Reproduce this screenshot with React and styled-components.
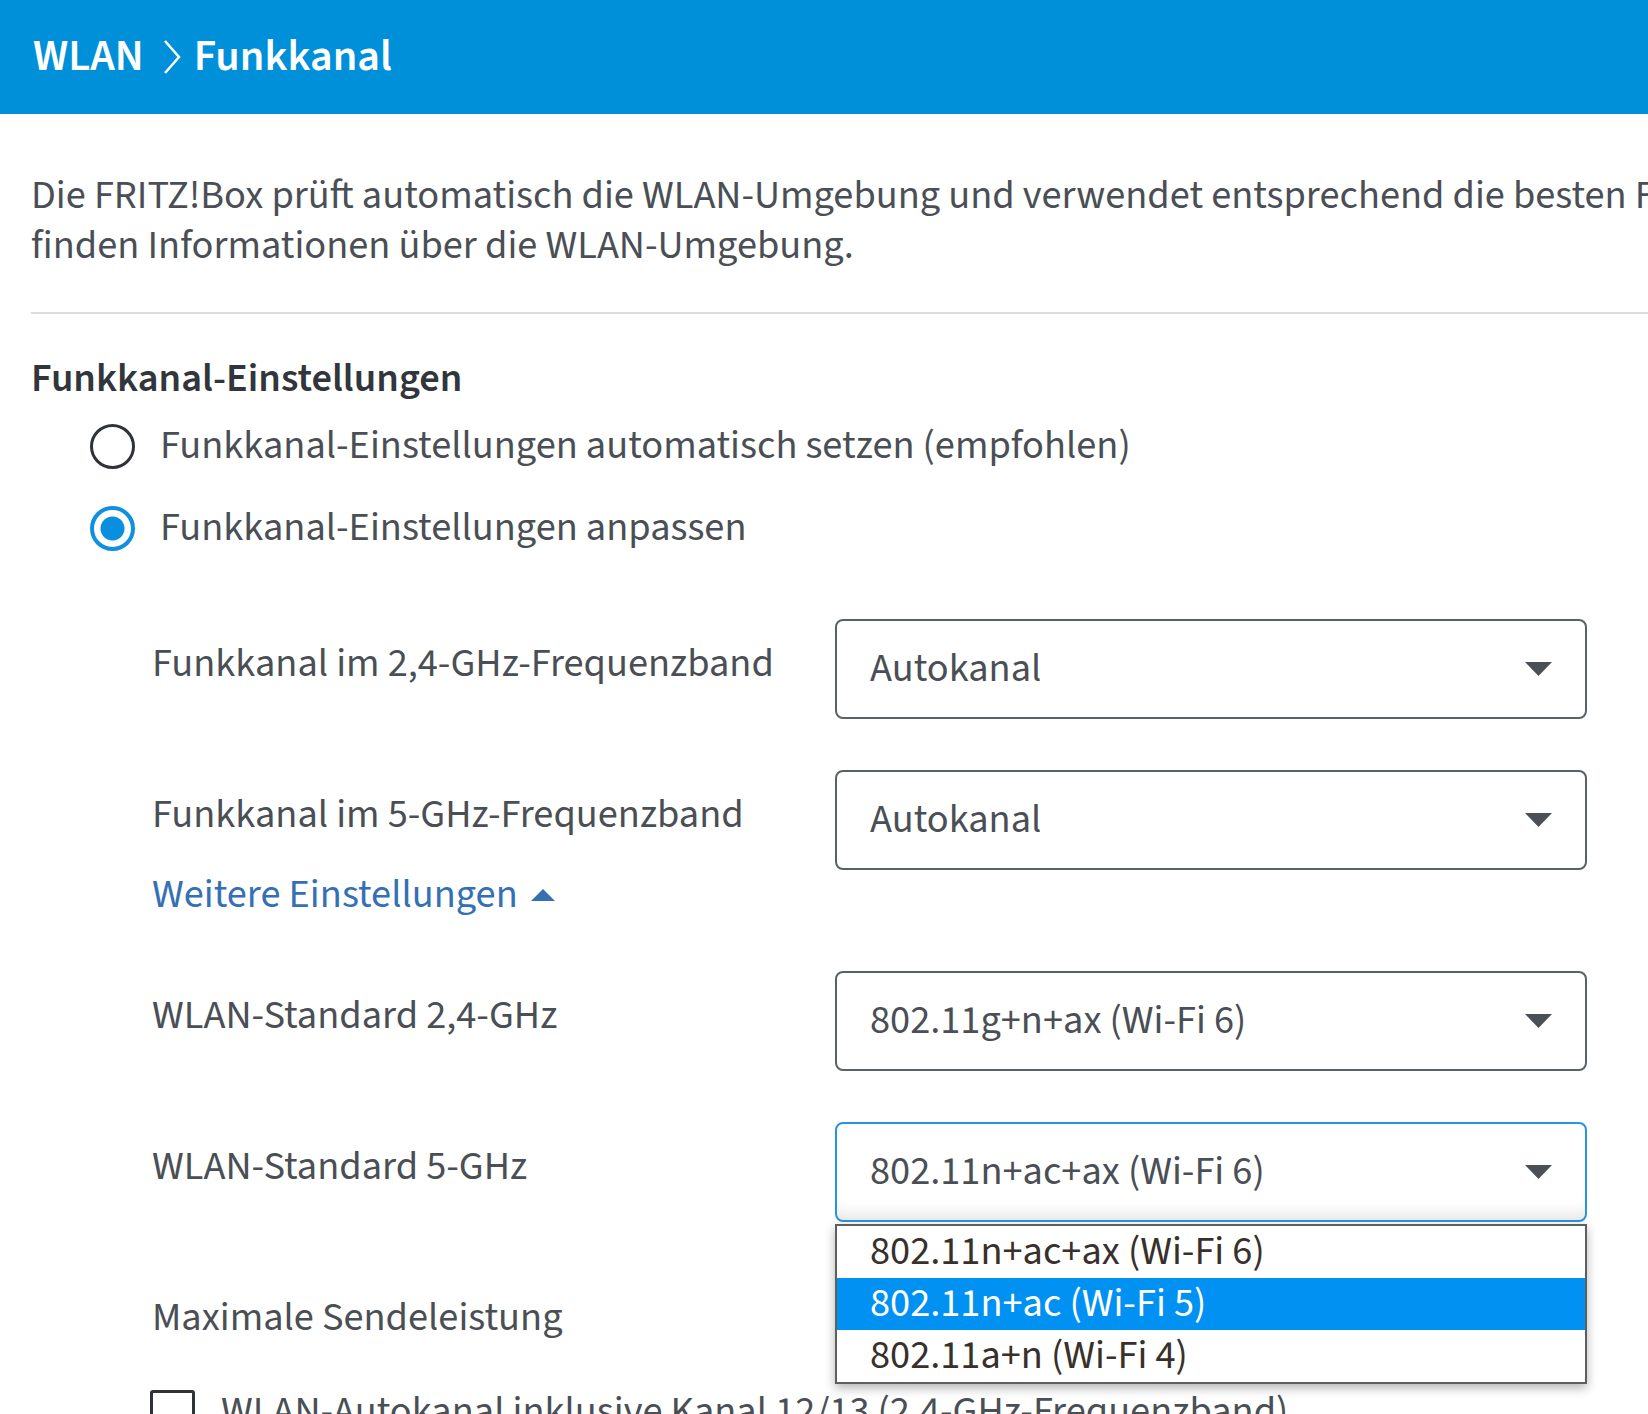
import React from "react";
import styled, { createGlobalStyle } from "styled-components";

const GlobalStyle = createGlobalStyle`
  html, body {
    margin: 0;
    background: #fff;
    overflow: hidden;
  }
  body {
    font-family: "Source Sans 3", "Source Sans Pro", Lato, sans-serif;
    color: #4a4f55;
  }
  * { box-sizing: border-box; }
`;

const fields = [
  { label: "Funkkanal im 2,4-GHz-Frequenzband", value: "Autokanal" },
  { label: "Funkkanal im 5-GHz-Frequenzband", value: "Autokanal", more: true },
  { label: "WLAN-Standard 2,4-GHz", value: "802.11g+n+ax (Wi-Fi 6)" },
  {
    label: "WLAN-Standard 5-GHz",
    value: "802.11n+ac+ax (Wi-Fi 6)",
    open: true,
    options: ["802.11n+ac+ax (Wi-Fi 6)", "802.11n+ac (Wi-Fi 5)", "802.11a+n (Wi-Fi 4)"],
    highlighted: 1,
  },
  { label: "Maximale Sendeleistung" },
];

function App() {
  return (
    <>
      <GlobalStyle />
      <Header>
        <Crumb>WLAN</Crumb>
        <Chevron viewBox="0 0 18 36" aria-hidden="true">
          <polyline points="2,2 16,18 2,34" />
        </Chevron>
        <Crumb>Funkkanal</Crumb>
      </Header>

      <Content>
        <Intro>
          <IntroLine>
            Die FRITZ!Box prüft automatisch die WLAN-Umgebung und verwendet entsprechend die besten Funkkanal-Einstellungen. Unter „WLAN-Umgebung“ Sie
          </IntroLine>
          <IntroLine>finden Informationen über die WLAN-Umgebung.</IntroLine>
        </Intro>

        <Divider />

        <SectionTitle>Funkkanal-Einstellungen</SectionTitle>

        <RadioList>
          <RadioRow>
            <RadioMark />
            Funkkanal-Einstellungen automatisch setzen (empfohlen)
          </RadioRow>
          <RadioRow>
            <RadioMark $checked />
            Funkkanal-Einstellungen anpassen
          </RadioRow>
        </RadioList>

        <Settings>
          {fields.map((f) => (
            <FieldRow key={f.label}>
              <FieldLabel>
                {f.label}
                {f.more && (
                  <MoreLink>
                    Weitere Einstellungen
                    <svg width="24" height="12" viewBox="0 0 24 12" aria-hidden="true">
                      <path d="M0 12 H24 L12 0 Z" fill="currentColor" />
                    </svg>
                  </MoreLink>
                )}
              </FieldLabel>
              {f.value && (
                <SelectWrap>
                  <SelectBox $focused={f.open}>
                    {f.value}
                    <svg width="27" height="14" viewBox="0 0 27 14" aria-hidden="true">
                      <path d="M0 0 H27 L13.5 14 Z" fill="#4a5056" />
                    </svg>
                  </SelectBox>
                  {f.open && (
                    <OptionList>
                      {f.options.map((o, i) => (
                        <OptionItem key={o} $active={i === f.highlighted}>
                          {o}
                        </OptionItem>
                      ))}
                    </OptionList>
                  )}
                </SelectWrap>
              )}
            </FieldRow>
          ))}
        </Settings>

        <CheckRow>
          <CheckMark />
          WLAN-Autokanal inklusive Kanal 12/13 (2,4-GHz-Frequenzband)
        </CheckRow>
      </Content>
    </>
  );
}

/* ---------------- Styled Components ---------------- */

const Header = styled.header`
  height: 114px;
  background: #0090da;
  color: #fff;
  display: flex;
  align-items: center;
  padding-left: 33px;
`;

const Crumb = styled.span`
  font-size: 44px;
  font-weight: 600;
  line-height: 1;
`;

const Chevron = styled.svg`
  width: 18px;
  height: 36px;
  margin: 0 13px 0 19px;
  fill: none;
  stroke: #fff;
  stroke-width: 2.5;
`;

const Content = styled.main`
  padding: 57px 0 0 31px;
  font-size: 40.4px;
  line-height: 50px;
`;

const Intro = styled.div`
  display: flex;
  flex-direction: column;
`;

const IntroLine = styled.p`
  margin: 0;
  height: 50px;
  white-space: nowrap;
`;

const Divider = styled.hr`
  margin: 41px 0 0;
  border: 0;
  height: 2px;
  width: 2000px;
  background: #dcdcdc;
`;

const SectionTitle = styled.h2`
  margin: 40px 0 0;
  font-size: 40.4px;
  line-height: 50px;
  font-weight: 600;
  color: #30363b;
`;

const RadioList = styled.div`
  margin-top: 17px;
  padding-left: 59px;
  display: flex;
  flex-direction: column;
  gap: 32px;
`;

const RadioRow = styled.label`
  display: flex;
  align-items: center;
  gap: 25px;
  height: 50px;
`;

const RadioMark = styled.span`
  width: 45px;
  height: 45px;
  flex: none;
  border-radius: 50%;
  border: ${(p) => (p.$checked ? "4px solid #1090e0" : "3px solid #2f3337")};
  background: ${(p) =>
    p.$checked ? "radial-gradient(circle, #0a8ee0 0 11.5px, #fff 12.5px)" : "#fff"};
`;

const Settings = styled.div`
  margin-top: 66px;
  padding-left: 121px;
  display: flex;
  flex-direction: column;
  gap: 51px;
`;

const FieldRow = styled.div`
  display: grid;
  grid-template-columns: 683px 752px;
  align-items: start;
`;

const FieldLabel = styled.div`
  padding-top: 20px;
  display: flex;
  flex-direction: column;
  align-items: flex-start;
`;

const MoreLink = styled.a`
  margin-top: 30px;
  display: inline-flex;
  align-items: center;
  gap: 13px;
  color: #3570b4;
  cursor: pointer;
`;

const SelectWrap = styled.div`
  position: relative;
`;

const SelectBox = styled.div`
  height: 100px;
  display: flex;
  align-items: center;
  justify-content: space-between;
  padding: 0 33px;
  border: 2px solid ${(p) => (p.$focused ? "#2a93e0" : "#5b6168")};
  border-radius: 8px;
  background: #fff;
  box-shadow: ${(p) =>
    p.$focused ? "inset 0 -18px 16px -12px rgba(0, 0, 0, 0.1)" : "none"};
`;

const OptionList = styled.ul`
  position: absolute;
  top: calc(100% + 2px);
  left: 0;
  right: 0;
  margin: 0;
  padding: 0;
  list-style: none;
  background: #fff;
  border: 2px solid #5f5f5f;
  box-shadow: 0 4px 10px rgba(0, 0, 0, 0.3);
  z-index: 2;
`;

const OptionItem = styled.li`
  height: 52px;
  line-height: 52px;
  padding-left: 33px;
  color: ${(p) => (p.$active ? "#fff" : "#38302b")};
  background: ${(p) => (p.$active ? "#0091f3" : "#fff")};
`;

const CheckRow = styled.label`
  margin-top: 44px;
  padding-left: 119px;
  display: flex;
  align-items: center;
  gap: 26px;
  height: 50px;
  white-space: nowrap;
`;

const CheckMark = styled.span`
  width: 45px;
  height: 45px;
  flex: none;
  border: 3px solid #2f3337;
  border-radius: 3px;
`;

export default App;
